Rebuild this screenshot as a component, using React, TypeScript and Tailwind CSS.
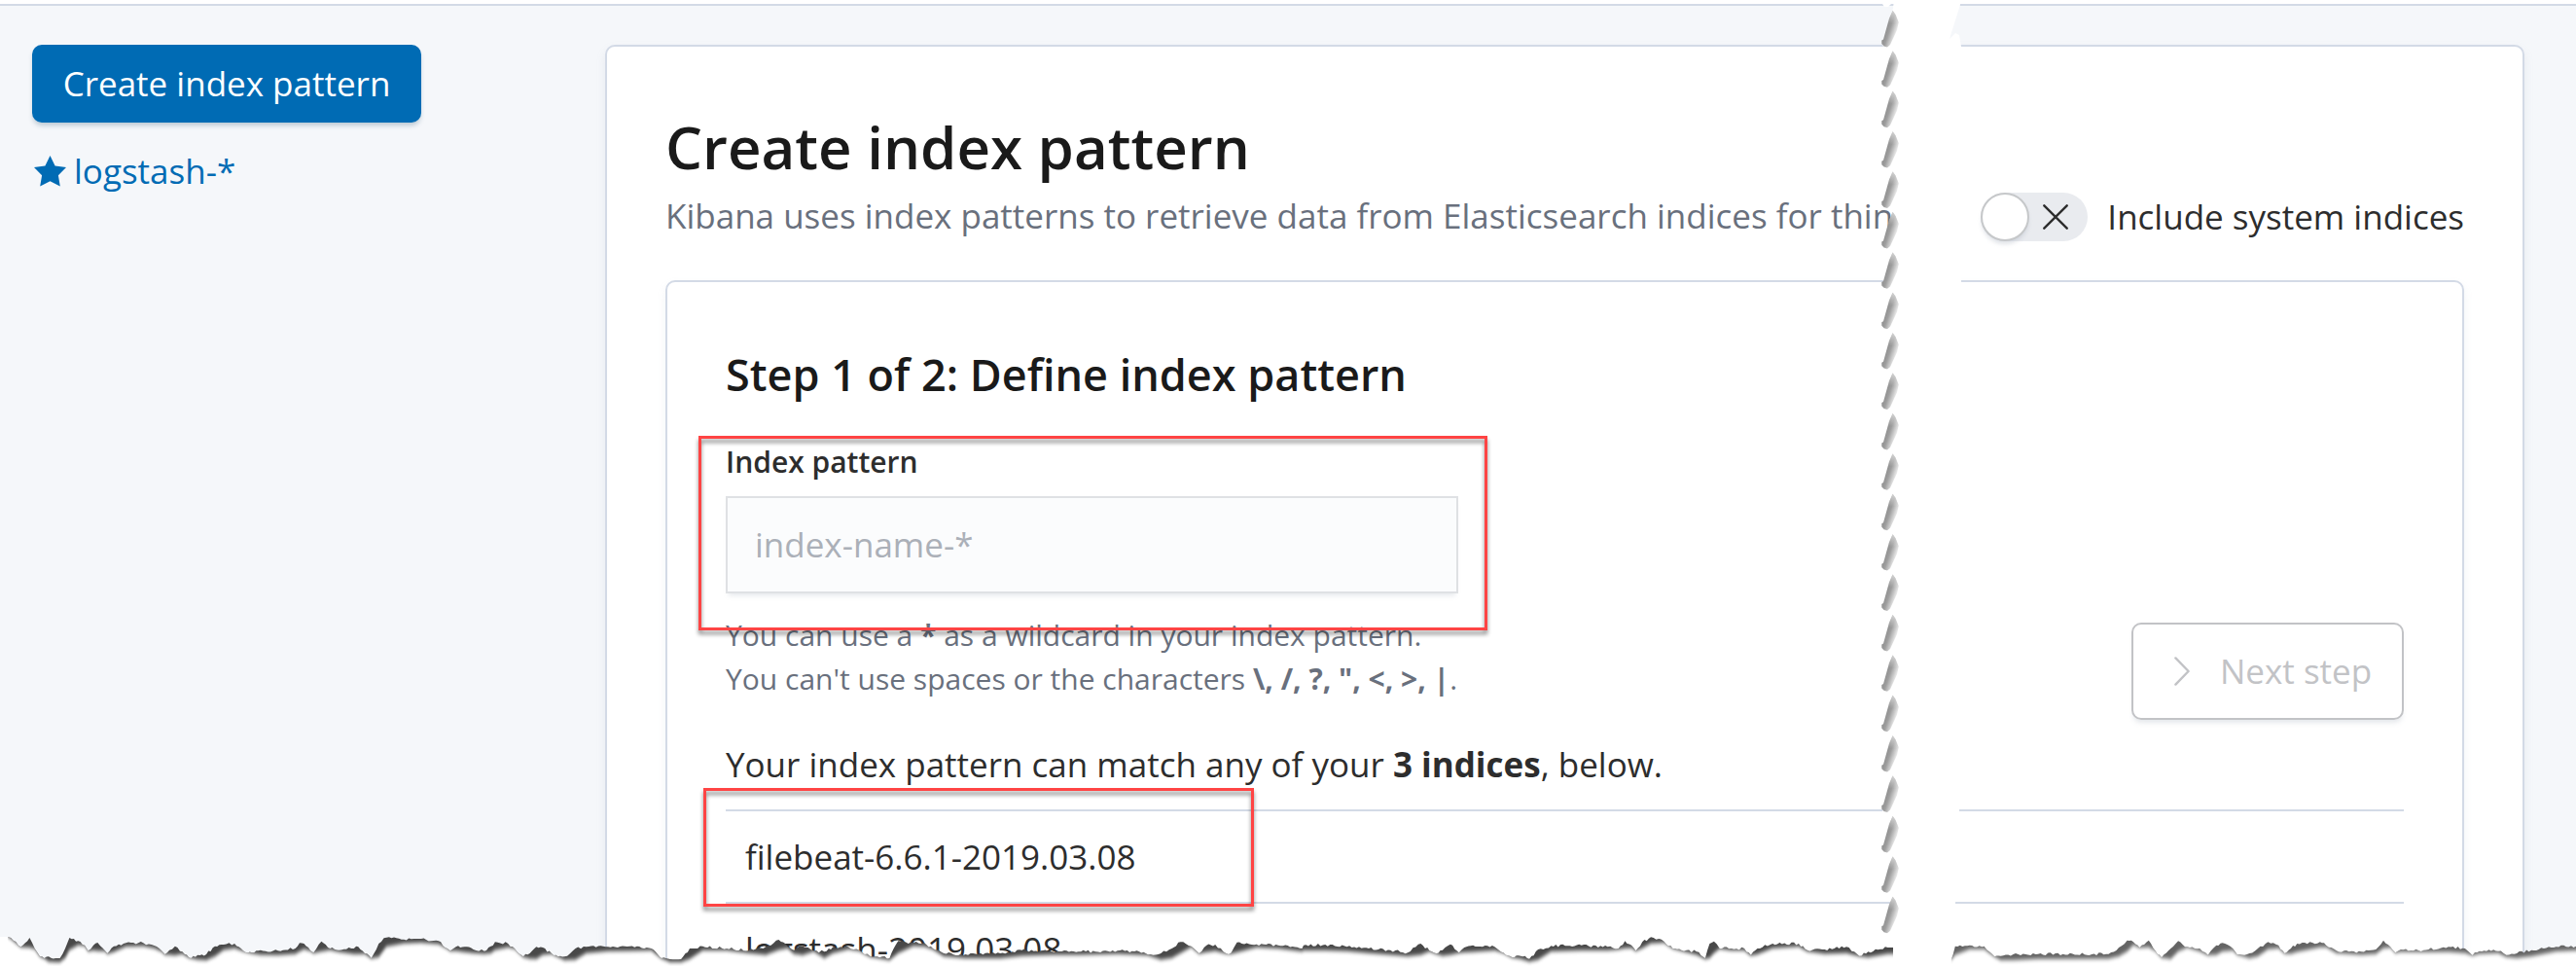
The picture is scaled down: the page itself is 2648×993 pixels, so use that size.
import type { ReactNode } from "react";

type Sample = [number, number, number];
type Strip = { x0: number; k: number; samples: Sample[] };

// Torn-edge profile: [offset, top, bottom], measured in units of 1/3 px vertically below y = 920.
const stripA: Strip = {
  x0: 0, k: 2.24,
  samples: [[18,129,131],[25,132,145],[48,160,163],[58,148,172],[68,132,173],[80,165,173],[92,190,190],[102,195,200],[112,190,216],[128,195,218],[138,195,218],[150,165,205],[160,132,180],[180,142,165],[195,155,165],[203,172,178],[215,155,182],[225,147,183],[242,172,178],[247,180,186],[262,158,186],[290,148,170],[330,148,168],[355,156,175],[372,172,182],[380,183,186],[390,170,195],[403,158,197],[420,175,192],[435,193,195],[455,185,210],[475,183,212],[495,158,200],[515,153,180],[540,150,175],[560,172,178],[580,178,190],[600,170,195],[640,172,196],[680,165,192],[690,148,185],[700,150,178],[715,172,174],[722,178,185],[740,143,185],[760,165,180],[780,170,186],[815,165,193],[825,160,193],[840,180,188],[855,195,198],[872,150,202],[890,131,170],[930,137,160],[970,135,158],[1010,142,162],[1030,165,168],[1037,172,174],[1050,160,183],[1070,160,187],[1090,168,190],[1115,173,192],[1130,158,190],[1140,145,180],[1170,150,172],[1185,165,170],[1205,190,195],[1220,180,207],[1235,160,208],[1250,162,195],[1270,180,188],[1285,190,195],[1300,190,212],[1325,165,210],[1350,160,190],[1400,160,184],[1450,158,183],[1500,165,182],[1520,192,196]],
};
const stripB: Strip = {
  x0: 680, k: 2.24,
  samples: [[0,195,200],[20,198,218],[45,198,218],[65,165,208],[95,158,182],[150,165,182],[200,172,190],[240,160,195],[270,138,180],[290,158,175],[305,170,192],[325,158,196],[350,172,180],[375,175,205],[395,160,190],[430,160,178],[455,170,182],[480,188,200],[525,195,212],[545,142,190],[580,148,168],[605,148,170],[625,165,178],[650,180,200],[700,183,206],[780,180,206],[830,170,198],[900,175,195],[960,175,195],[1050,172,192],[1100,175,195],[1120,184,196],[1150,180,210],[1175,165,205],[1195,145,190],[1220,158,170],[1238,180,183],[1255,155,187],[1275,153,183],[1300,180,185],[1312,178,192],[1325,146,188],[1370,152,172],[1420,155,176],[1475,165,185]],
};
const stripC: Strip = {
  x0: 1340, k: 2.24,
  samples: [[0,155,182],[50,153,182],[100,160,184],[150,165,190],[200,170,195],[240,178,200],[270,150,195],[290,172,182],[305,180,188],[320,170,198],[338,152,195],[358,178,182],[370,162,188],[390,155,186],[440,160,182],[460,178,182],[480,192,196],[500,188,208],[520,197,216],[540,168,210],[570,157,185],[640,155,182],[700,160,182],[725,165,178],[740,142,175],[755,155,174],[765,172,176],[780,145,175],[800,130,160],[830,143,158],[850,165,167],[870,170,182],[905,175,195],[925,195,207],[935,150,205],[945,143,190],[958,165,170],[985,165,182],[1015,165,182],[1030,185,194],[1045,165,194],[1080,150,175],[1140,150,170],[1160,170,185],[1200,168,192],[1250,160,190],[1280,188,193],[1300,175,203],[1345,162,192]],
};
const stripD: Strip = {
  x0: 1980, k: 2.347,
  samples: [[60,200,205],[70,158,195],[105,155,178],[140,158,178],[165,190,192],[180,188,212],[210,183,212],[270,182,208],[330,182,208],[440,182,207],[465,162,200],[485,140,185],[500,145,165],[515,162,165],[537,140,172],[553,172,174],[568,193,195],[590,165,208],[608,142,185],[630,160,172],[660,165,185],[680,185,192],[700,155,195],[715,148,185],[740,165,182],[750,183,186],[780,180,206],[800,165,200],[825,145,178],[850,155,175],[865,180,183],[880,165,192],[895,150,186],[950,145,172],[965,155,172],[990,172,190],[1050,175,195],[1085,168,192],[1103,140,175],[1120,160,172],[1132,178,180],[1145,168,186],[1200,170,187],[1260,160,186],[1300,165,190],[1318,186,190],[1335,173,192],[1380,173,190],[1400,185,202],[1425,180,205],[1460,170,200],[1520,160,185],[1568,158,182]],
};

const place = (s: Strip): Sample[] =>
  s.samples.map(([x, t, b]): Sample => [s.x0 + x / s.k, 920 + t / 3, 920 + b / 3]);

const leftEdge: Sample[] = [...place(stripA), ...place(stripB), ...place(stripC)];
const rightEdge: Sample[] = place(stripD);

const jitter = (n: number) => {
  const v = Math.sin(n * 12.9898) * 43758.5453;
  return v - Math.floor(v);
};

function topLine(edge: Sample[]): string {
  const pts: string[] = [];
  for (let i = 0; i < edge.length - 1; i++) {
    const [x1, y1] = edge[i];
    const [x2, y2] = edge[i + 1];
    const n = Math.max(1, Math.round((x2 - x1) / 2.5));
    for (let j = 0; j < n; j++) {
      const f = j / n;
      const bump = j === 0 ? 0 : (jitter(i * 17 + j) - 0.5) * 3;
      pts.push(`${(x1 + (x2 - x1) * f).toFixed(1)},${(y1 + (y2 - y1) * f + bump).toFixed(1)}`);
    }
  }
  const last = edge[edge.length - 1];
  pts.push(`${last[0].toFixed(1)},${last[1].toFixed(1)}`);
  return pts.join(" ");
}

function Torn({ id, edge, x1, x2, shade }: { id: string; edge: Sample[]; x1: number; x2: number; shade: string }) {
  const start = edge[0];
  const end = edge[edge.length - 1];
  const top = `${x1},${start[1]} ${topLine(edge)} ${x2},${end[1]} ${x2},994 ${x1},994`;
  const low = (d: number) =>
    `${x1 - 10},${start[1] - 8} ${start[0] - 1},${start[1] - 8} ${edge
      .map(([x, t, b]) => `${x.toFixed(1)},${(b - Math.min(d, (b - t) * 0.8)).toFixed(1)}`)
      .join(" ")} ${x2 + 10},${end[2] - d} ${x2 + 10},1010 ${x1 - 10},1010`;
  return (
    <g>
      <clipPath id={id}>
        <polygon points={top} />
      </clipPath>
      <g clipPath={`url(#${id})`}>
        <rect x={start[0]} y={955} width={x2 - start[0]} height={40} fill={shade} />
        <polygon points={low(3.6)} fill="#fff" filter="url(#soft)" />
      </g>
    </g>
  );
}

function TearOverlay() {
  const notches = Array.from({ length: 23 }, (_, i) => 11 + i * 41.4);
  const seam =
    "1947,0 " +
    notches.map((y) => `1945.6,${y} 1935,${y + 36} 1938,${y + 37.5} 1947,${y + 38}`).join(" ");
  return (
    <svg className="pointer-events-none absolute inset-0" width="2648" height="993" viewBox="0 0 2648 993">
      <defs>
        <filter id="soft" x="-5%" y="-50%" width="110%" height="200%">
          <feGaussianBlur stdDeviation="0.8 1.9" />
        </filter>
        <linearGradient id="notch" gradientUnits="userSpaceOnUse" x1="4" y1="17" x2="16" y2="21">
          <stop offset="0" stopColor="#8c8c8c" />
          <stop offset="0.4" stopColor="#9e9e9e" />
          <stop offset="1" stopColor="#f0f0f0" />
        </linearGradient>
        <linearGradient id="notchFade" x1="0" y1="0" x2="0" y2="1">
          <stop offset="0" stopColor="#fff" stopOpacity="0.6" />
          <stop offset="0.35" stopColor="#fff" stopOpacity="0" />
        </linearGradient>
      </defs>
      <Torn id="tearLeft" edge={leftEdge} x1={0} x2={1946} shade="#484848" />
      <Torn id="tearRight" edge={rightEdge} x1={2005} x2={2648} shade="#646464" />
      <polygon points={`${seam} 2005,993 2010,929 2014,834 2016,290 2016,48 2014,36 2010,34 2004,40 2015,5 2015,0`} fill="#fff" />
      <polygon points="1935,4 1937,7 1941,7 1944,4" fill="#fff" />
      {notches.map((y) => (
        <g key={y} transform={`translate(1934 ${y})`}>
          <path d="M11.6 0L14.5 4L17.8 12L16 20L9 35L6 37.4L2.6 36.4L0.3 34V30.5L2 29.5L8 8Z" fill="url(#notch)" />
          <path d="M11.6 0L14.5 4L17.8 12L16 20L9 35L6 37.4L2.6 36.4L0.3 34V30.5L2 29.5L8 8Z" fill="url(#notchFade)" />
        </g>
      ))}
    </svg>
  );
}

function Highlight({ className }: { className: string }) {
  return (
    <div
      className={`pointer-events-none absolute border-[3px] border-[#ff4444] drop-shadow-[0_4px_2px_rgba(0,0,0,0.48)] ${className}`}
    />
  );
}

function IndexRow({ children }: { children: ReactNode }) {
  return (
    <div className="flex h-[95px] items-center border-t-2 border-[#d3dae6] pl-[20px] text-[35px] leading-[52px] whitespace-nowrap">
      {children}
    </div>
  );
}

export default function App() {
  return (
    <div className="relative h-[993px] w-[2648px] overflow-hidden bg-[#f5f7fa] font-['Open_Sans',sans-serif] text-[#2d2d2d]">
      <div className="h-[6px] border-b-2 border-[#d3dae6] bg-white" />
      <div className="flex pt-[40px] pl-[33px]">
        <aside className="w-[589px] shrink-0">
          <button className="flex h-[80px] w-[400px] items-center justify-center rounded-[10px] bg-[#006bb4] text-[35px] whitespace-nowrap text-white shadow-[0_4px_5px_-1px_rgba(54,97,126,0.3)]">
            Create index pattern
          </button>
          <a className="mt-[24px] flex h-[52px] items-center gap-[8px] pl-[2px] text-[35px] leading-[52px] text-[#006bb4]">
            <svg width="33" height="32" viewBox="0 0 33 32" fill="#006bb4">
              <path d="M16.5 0L21.6 10.6L33 12.1L24.9 20.2L26.8 31.6L16.5 26.2L6.2 31.6L8.1 20.2L0 12.1L11.4 10.6Z" />
            </svg>
            <span>logstash-*</span>
          </a>
        </aside>
        <main className="h-[1100px] w-[1973px] shrink-0 rounded-[10px] border-2 border-[#d3dae6] bg-white px-[60px] pt-[72px] shadow-[0_5px_10px_rgba(152,162,179,0.15)]">
          <h1 className="h-[62px] text-[60px] leading-[62px] font-semibold text-[#1a1a1a]">
            Create index pattern
          </h1>
          <div className="mt-[13px] flex h-[56px] items-center justify-between">
            <p className="pb-[3px] text-[35px] leading-[52px] whitespace-nowrap text-[#69707d]">
              Kibana uses index patterns to retrieve data from Elasticsearch indices for thin
            </p>
            <label className="flex items-center text-[35px] leading-[52px] whitespace-nowrap">
              <span className="mr-[20px] flex h-[50px] w-[110px] items-center justify-between rounded-full bg-[#e9ebef] pr-[20px]">
                <span className="size-[50px] rounded-full border-2 border-[#c6c8ca] bg-white shadow-[0_4px_4px_-1px_rgba(152,162,179,0.3)]" />
                <svg width="26" height="26" viewBox="0 0 26 26" fill="none" stroke="#2d2d2d" strokeWidth="2.4" strokeLinecap="round">
                  <path d="M1.3 1.3L24.7 24.7M24.7 1.3L1.3 24.7" />
                </svg>
              </span>
              Include system indices
            </label>
          </div>
          <section className="mt-[37px] h-[900px] rounded-[10px] border-2 border-[#d3dae6] px-[60px] pt-[61px] shadow-[0_5px_10px_rgba(152,162,179,0.12)]">
            <h2 className="h-[68px] text-[45px] leading-[68px] font-semibold text-[#1a1a1a]">
              Step 1 of 2: Define index pattern
            </h2>
            <div className="flex items-start justify-between">
              <div className="pt-[33px]">
                <div className="h-[45px] text-[30px] leading-[45px] font-semibold whitespace-nowrap">Index pattern</div>
                <div className="mt-[13px] flex h-[100px] w-[753px] items-center border-2 border-[#dfe1e4] bg-[#fbfcfd] pl-[28px] text-[35px] text-[#abb0b8] shadow-[0_5px_5px_-3px_rgba(152,162,179,0.25)]">
                  index-name-*
                </div>
                <div className="mt-[20px] text-[30px] leading-[45px] whitespace-nowrap text-[#69707d]">
                  <p>
                    You can use a <b>*</b> as a wildcard in your index pattern.
                  </p>
                  <p>
                    You can't use spaces or the characters <b>{'\\, /, ?, ", <, >, |'}</b>.
                  </p>
                </div>
              </div>
              <button className="mt-[221px] flex h-[100px] w-[280px] items-center rounded-[10px] border-2 border-[#c2c3c6] pl-[42px] text-[35px] whitespace-nowrap text-[#c2c3c6] shadow-[0_5px_5px_-2px_rgba(152,162,179,0.25)]">
                <svg width="16" height="30" viewBox="0 0 16 30" fill="none" stroke="#c2c3c6" strokeWidth="2.4" strokeLinecap="round" strokeLinejoin="round">
                  <path d="M1.4 1.4L14.6 15L1.4 28.6" />
                </svg>
                <span className="ml-[31px]">Next step</span>
              </button>
            </div>
            <p className="mt-[20px] h-[52px] text-[35px] leading-[52px] whitespace-nowrap">
              Your index pattern can match any of your <b>3 indices</b>, below.
            </p>
            <div className="mt-[20px]">
              <IndexRow>filebeat-6.6.1-2019.03.08</IndexRow>
              <IndexRow>logstash-2019.03.08</IndexRow>
            </div>
          </section>
        </main>
      </div>
      <Highlight className="top-[448px] left-[718px] h-[200px] w-[811px]" />
      <Highlight className="top-[810px] left-[723px] h-[122px] w-[566px]" />
      <TearOverlay />
    </div>
  );
}
